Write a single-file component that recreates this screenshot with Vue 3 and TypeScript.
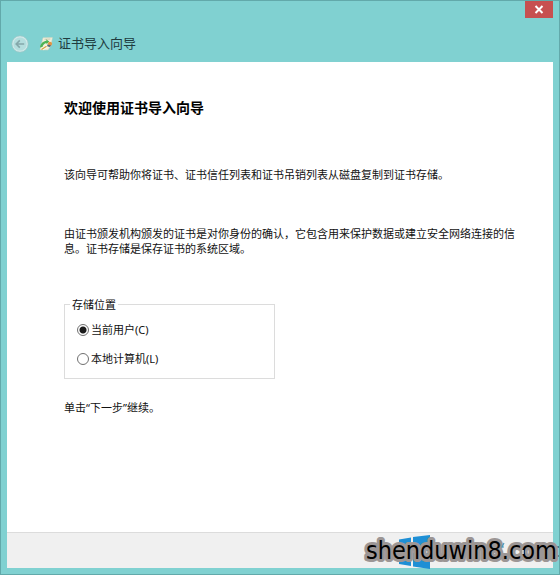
<script setup lang="ts">
import { ref } from 'vue'

type Store = 'user' | 'machine'

const store = ref<Store>('user')
const options: { value: Store; label: string }[] = [
  { value: 'user', label: '当前用户(C)' },
  { value: 'machine', label: '本地计算机(L)' },
]
</script>

<template>
  <div class="window">
    <div class="caption">
      <button class="close" type="button" aria-label="关闭">
        <svg width="10" height="9" viewBox="0 0 10 9">
          <path d="M1.5 1 8.5 8M8.5 1 1.5 8" stroke="#fff" stroke-width="2" fill="none" />
        </svg>
      </button>
    </div>
    <header class="titlebar">
      <button class="back" type="button" aria-label="返回">
        <svg width="18" height="18" viewBox="0 0 18 18">
          <circle cx="9" cy="9" r="7.3" fill="#b4dede" stroke="#d0e8e8" stroke-width="1.4" />
          <circle cx="9" cy="9" r="8.3" fill="none" stroke="#a0c4c4" stroke-width=".6" />
          <path d="M13.2 9H5.5M8.800 5.400 5.200 9 8.800 12.600" fill="none" stroke="#84a8aa" stroke-width="1.6" />
        </svg>
      </button>
      <svg class="cert" width="14" height="14" viewBox="0 0 14 14">
        <path d="M4 .8 13.400 .5 12 8.500 9 13 1 12.800Z" fill="#f3f0dc" stroke="#cfd3bb" stroke-width=".5" />
        <path d="M5.500 2.300 11.500 2" stroke="#c2bfa5" stroke-width=".8" />
        <path d="M1 10.500C1.500 6.500 4 4.200 7.500 3.800L7 2.300 10.300 4.600 7.500 7.200V6C5.200 6.400 4 8 3.500 10Z" fill="#4cb356" />
        <path d="M1.500 11.500 7.500 7.500 9 10 4.500 13.200Z" fill="#f8f6e8" />
        <path d="M2.500 12.500 7.500 9.200" stroke="#d2a23f" stroke-width="1.2" />
        <circle cx="11" cy="6.800" r="2.100" fill="#e29444" />
        <path d="M8 7.500 12 8.300 11 10 8.500 9.500Z" fill="#596d79" />
      </svg>
      <span class="title">证书导入向导</span>
    </header>
    <main class="panel">
      <div class="content">
        <h1>欢迎使用证书导入向导</h1>
        <p class="intro">该向导可帮助你将证书、证书信任列表和证书吊销列表从磁盘复制到证书存储。</p>
        <p class="about">由证书颁发机构颁发的证书是对你身份的确认，它包含用来保护数据或建立安全网络连接的信息。证书存储是保存证书的系统区域。</p>
        <fieldset>
          <legend>存储位置</legend>
          <label v-for="o in options" :key="o.value">
            <input v-model="store" type="radio" name="store" :value="o.value" />
            <span>{{ o.label }}</span>
          </label>
        </fieldset>
        <p class="hint">单击“下一步”继续。</p>
      </div>
      <footer></footer>
    </main>
    <div class="watermark">
      <svg width="200" height="44" viewBox="0 0 200 44">
        <path d="M39 8.500 51 6.500V20H39ZM53 6 70 4V20H53ZM39 22H51V35L39 33ZM53 22H70V38L53 35.500Z" fill="#1e8fd5" />
        <path d="M198 15V17M198 24V26" stroke="#3c7f94" stroke-width="2" />
        <text class="mark" x="6" y="28">shenduwin8.com</text>
        <path d="M144 12 142 16H144" fill="none" stroke="#4b9cbd" stroke-width="1.2" />
        <path d="M163 19V23" stroke="#e8eef0" stroke-width="1.5" />
      </svg>
    </div>
  </div>
</template>

<style>
body {
  margin: 0;
}
</style>

<style scoped>
.window {
  position: relative;
  box-sizing: border-box;
  display: flex;
  flex-direction: column;
  min-height: 100vh;
  padding: 0 6px 6px;
  border: 1px solid #62a9aa;
  background: #80d1d1;
  color: #111;
  font: 11px/15px "Noto Sans", "Noto Sans CJK SC", sans-serif;
  overflow: hidden;
}
.caption {
  display: flex;
  justify-content: flex-end;
  height: 24px;
}
.close {
  display: flex;
  align-items: center;
  justify-content: center;
  width: 28px;
  height: 17px;
  padding: 0;
  border: 0;
  background: #c75050;
}
.titlebar {
  display: flex;
  align-items: center;
  height: 37px;
  padding-left: 4px;
}
.back {
  display: flex;
  padding: 0;
  border: 0;
  background: none;
}
.cert {
  margin-left: 10px;
}
.title {
  margin-left: 5px;
  padding-bottom: 2px;
  color: #203c3f;
  font-size: 13px;
  line-height: 20px;
}
.panel {
  display: flex;
  flex: 1;
  flex-direction: column;
  background: #fff;
}
.content {
  flex: 1;
  padding: 36px 36px 24px 57px;
}
h1 {
  margin: 0;
  color: #000;
  font-size: 14px;
  font-weight: 700;
  line-height: 20px;
}
p {
  margin: 0;
}
.intro {
  margin-top: 49px;
}
.about {
  margin-top: 44px;
}
fieldset {
  box-sizing: border-box;
  display: flex;
  flex-direction: column;
  gap: 14px;
  width: 211px;
  margin: 41px 0 0;
  padding: 10px 12px 12px;
  border: 1px solid #dcdcdc;
}
legend {
  margin-left: -7px;
  padding: 0 2px;
}
label {
  display: flex;
  align-items: center;
  gap: 2px;
}
input {
  appearance: none;
  box-sizing: border-box;
  width: 12px;
  height: 12px;
  margin: 0;
  border: 1px solid #707070;
  border-radius: 50%;
  background: #fff;
}
input:checked {
  background: radial-gradient(circle, #1c1c1c 0 3px, #fff 4px);
}
.hint {
  margin-top: 21px;
}
footer {
  height: 35px;
  border-top: 1px solid #dcdcdc;
  background: #f0f0f0;
}
.watermark {
  position: absolute;
  right: -1px;
  bottom: -1px;
  height: 44px;
  pointer-events: none;
}
.mark {
  fill: #000;
  stroke: #9c9695;
  stroke-width: 6px;
  stroke-linejoin: round;
  paint-order: stroke;
  font: 25px "DejaVu Sans Condensed", "Noto Sans CJK SC", sans-serif;
}
</style>
